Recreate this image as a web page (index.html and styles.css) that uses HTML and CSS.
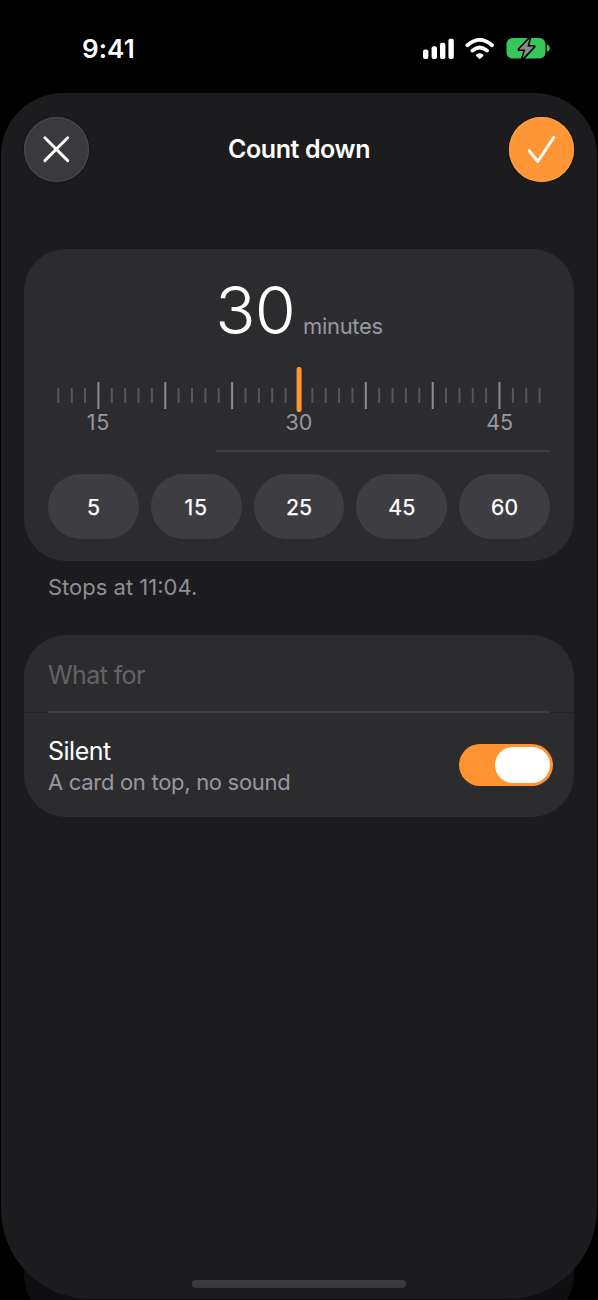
FILE: index.html
```html
<!DOCTYPE html>
<html lang="en">
<head>
<meta charset="utf-8">
<title>Count down</title>
<link rel="stylesheet" href="styles.css">
</head>
<body>
<div class="screen">
  <header class="status">
    <span class="time">9:41</span>
    <svg class="status-icons" width="128" height="24" viewBox="0 0 128 24">
      <g fill="#fff">
        <rect x="1" y="13.5" width="5.4" height="9.5" rx="2"/>
        <rect x="9.6" y="10.3" width="5.4" height="12.7" rx="2"/>
        <rect x="18" y="6.7" width="5.4" height="16.3" rx="2"/>
        <rect x="26.4" y="2.8" width="5.4" height="20.2" rx="2"/>
      </g>
      <g fill="none" stroke="#fff" stroke-width="3.8" stroke-linecap="round">
        <path d="M45.4 9.2 Q57.7 -1.4 70 9.2"/>
        <path d="M50.3 14.6 Q57.7 8.4 65.1 14.6"/>
      </g>
      <path d="M57.7 23.3 L54.2 20.1 Q53.5 19.3 54.4 18.6 Q57.7 16 61 18.6 Q61.9 19.3 61.2 20.1 Z" fill="#fff"/>
      <rect x="84.5" y="2" width="39" height="20.4" rx="6" fill="#35c759"/>
      <path d="M124.8 8.6 Q127.8 9.6 127.8 12.2 Q127.8 14.8 124.8 15.8 Z" fill="#35c759"/>
      <path d="M107.6 2.4 L97 13.6 H103.2 L100.6 22.6 L112 10.6 H105.4 Z" fill="#8b8b8b" stroke="#000" stroke-width="3" stroke-linejoin="round" paint-order="stroke"/>
    </svg>
  </header>
  <main class="sheet">
    <div class="toolbar">
      <button class="round close" aria-label="Close">
        <svg width="65" height="65" viewBox="0 0 65 65"><path d="M20.9 20.8 L43.7 43.6 M43.7 20.8 L20.9 43.6"/></svg>
      </button>
      <h1 class="title">Count down</h1>
      <button class="round confirm" aria-label="Done">
        <svg width="65" height="65" viewBox="0 0 65 65"><path d="M20.2 33.8 L28.9 44.5 L44.8 20.2"/></svg>
      </button>
    </div>
    <section class="card timer">
      <div class="reading"><span class="value">30</span><span class="unit">minutes</span></div>
      <svg class="ruler" width="502" height="46" viewBox="0 0 502 46">
        <path class="minor" d="M10.3 21v15M23.7 21v15M37 21v15M63.8 21v15M77.2 21v15M90.5 21v15M103.9 21v15M130.6 21v15M144 21v15M157.4 21v15M170.7 21v15M197.5 21v15M210.9 21v15M224.2 21v15M237.6 21v15M264.4 21v15M277.7 21v15M291.1 21v15M304.5 21v15M331.2 21v15M344.6 21v15M357.9 21v15M371.3 21v15M398 21v15M411.4 21v15M424.8 21v15M438.1 21v15M464.9 21v15M478.3 21v15M491.6 21v15"/>
        <path class="major" d="M50.4 15v27M117.3 15v27M184.1 15v27M317.8 15v27M384.7 15v27M451.5 15v27"/>
        <rect class="needle" x="248.6" y="0" width="5" height="45" rx="2"/>
      </svg>
      <div class="scale"><span>15</span><span>30</span><span>45</span></div>
      <div class="rule"></div>
      <div class="presets">
        <button>5</button><button>15</button><button>25</button><button>45</button><button>60</button>
      </div>
    </section>
    <p class="note">Stops at 11:04.</p>
    <section class="card options">
      <div class="field"><span class="placeholder">What for</span></div>
      <div class="divider"></div>
      <div class="option">
        <div class="labels"><span class="name">Silent</span><span class="hint">A card on top, no sound</span></div>
        <div class="toggle"><span class="knob"></span></div>
      </div>
    </section>
    <div class="home"></div>
  </main>
</div>
</body>
</html>
```
FILE: styles.css
```css
* { box-sizing: border-box; }
body { margin: 0; background: #000; color: #fff; font-family: Inter, "Liberation Sans", sans-serif; }
button { border: 0; padding: 0; color: inherit; font: inherit; }
.screen { position: relative; width: 598px; height: 1300px; display: flex; flex-direction: column; overflow: hidden; }
.screen::before { content: ""; position: absolute; left: 24px; right: 24px; bottom: -20px; height: 120px; border-radius: 44px; background: #0f0f11; }
.status { height: 92.5px; flex: none; display: flex; justify-content: space-between; align-items: flex-start; padding: 36px 48px 0 82px; }
.time { font-size: 26px; line-height: 26px; font-weight: 600; letter-spacing: 0.1px; }
.sheet { position: relative; height: 1206.5px; margin: 0 1px; padding: 24px 23px 0; border-radius: 62px 62px 90px 90px; background: #1c1c1e; display: flex; flex-direction: column; }
.toolbar { display: flex; justify-content: space-between; align-items: center; height: 65px; }
.round { width: 65px; height: 65px; border-radius: 50%; flex: none; }
.round svg { display: block; fill: none; stroke: #fff; stroke-width: 2.9; stroke-linecap: round; stroke-linejoin: round; }
.close { background: #3a3a3c; box-shadow: inset 0 0 1px 1px #4b4b4e, 0 0 2px #111; }
.confirm { background: #ff9636; box-shadow: inset 0 0 1px 1px #ffa143, 0 0 2px #171310; }
.title { margin: 0; font-size: 25px; font-weight: 600; line-height: 30px; letter-spacing: -0.4px; }
.card { background: #2c2c2e; border-radius: 42px; }
.timer { margin-top: 67.5px; height: 312px; padding: 26px 24px 0; display: flex; flex-direction: column; }
.reading { height: 92px; flex: none; display: flex; justify-content: center; align-items: baseline; gap: 8px; }
.value { font-size: 66.5px; line-height: 70px; font-weight: 300; letter-spacing: -0.8px; }
.unit { font-size: 22px; letter-spacing: -0.35px; color: #98989f; }
.ruler { display: block; flex: none; }
.minor { stroke: #57575a; stroke-width: 2; }
.major { stroke: #8d8d92; stroke-width: 2; }
.needle { fill: #ff9636; }
.scale { height: 27px; flex: none; padding: 0 0.4px; display: flex; justify-content: space-between; align-items: flex-start; font-size: 21.5px; line-height: 27px; margin-top: -4px; color: #98989f; }
.scale span { width: 100px; text-align: center; }
.scale span:first-child { letter-spacing: 0.8px; }
.rule { height: 2px; flex: none; margin: 14px 0 22px 168px; background: #3c3c40; }
.presets { display: grid; grid-template-columns: repeat(5, 1fr); gap: 11.8px; }
.presets button { height: 65px; border-radius: 33px; background: #3e3d42; font-size: 21.5px; font-weight: 400; -webkit-text-stroke: 0.25px #fff; }
.presets button:nth-child(2) { letter-spacing: 0.8px; }
.note { margin: 14px 0 0 24px; font-size: 22px; line-height: 24px; color: #8e8e93; }
.options { margin-top: 36px; height: 182px; }
.field { height: 76px; padding: 3px 24px 0; display: flex; align-items: center; }
.placeholder { font-size: 25px; letter-spacing: -0.6px; color: #636366; }
.divider { height: 2px; background: linear-gradient(#3c3c40, #3c3c40) center / 502px 2px no-repeat, linear-gradient(#242427, #242427) bottom / 100% 1px no-repeat; }
.option { height: 104px; padding: 0 21px 0 24px; display: flex; justify-content: space-between; align-items: center; }
.labels { display: flex; flex-direction: column; gap: 1px; padding-top: 3px; }
.name { font-size: 25px; line-height: 30px; letter-spacing: -0.5px; }
.hint { font-size: 22px; line-height: 30px; letter-spacing: -0.3px; color: #98989f; }
.toggle { width: 94px; height: 42px; border-radius: 21px; background: #ff9331; padding: 3px; display: flex; justify-content: flex-end; }
.knob { width: 55px; height: 36px; border-radius: 18px; background: #fff; }
.home { position: absolute; left: 191px; bottom: 11px; width: 214px; height: 8px; border-radius: 4px; background: linear-gradient(#3c3c3e, #373739); }
```
